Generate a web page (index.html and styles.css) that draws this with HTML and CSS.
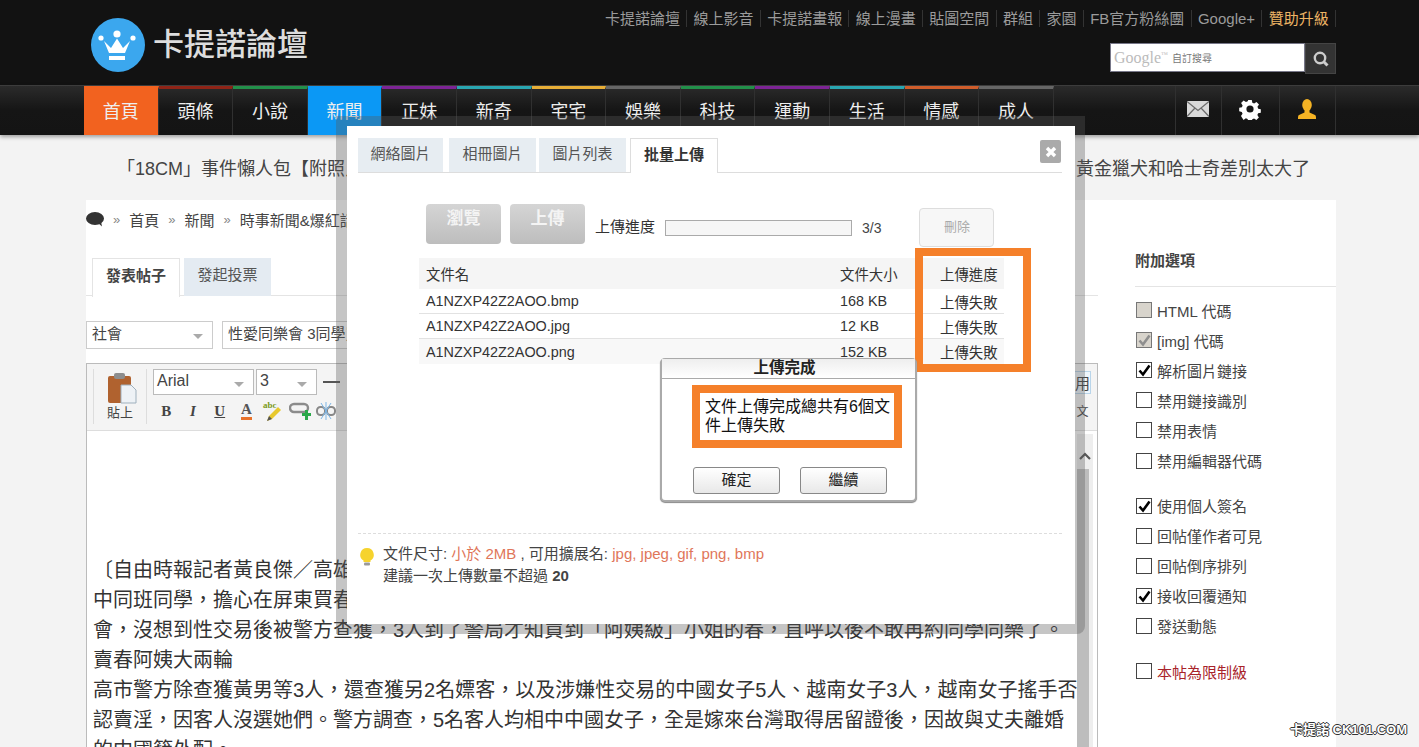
FILE: index.html
```html
<!DOCTYPE html>
<html lang="zh-Hant">
<head>
<meta charset="utf-8">
<title>卡提諾論壇</title>
<link rel="stylesheet" href="styles.css">
</head>
<body>
<header class="top">
  <div class="brand">
    <svg class="logo-mark" width="56" height="56" viewBox="0 0 56 56"><circle cx="28" cy="28" r="27" fill="#3ba7ee"/><path d="M14 24l7 7 6-9.500 6 9.500 7-7-5 12H19z" fill="#fff"/><circle cx="27" cy="17" r="3.600" fill="#fff"/><circle cx="11" cy="21" r="2.600" fill="#fff"/><circle cx="43" cy="21" r="2.600" fill="#fff"/><rect x="19" y="39" width="16" height="4" fill="#fff"/></svg>
    <span class="brand-name">卡提諾論壇</span>
  </div>
  <div class="top-right">
    <nav class="links">
      <a>卡提諾論壇</a><a>線上影音</a><a>卡提諾畫報</a><a>線上漫畫</a><a>貼圖空間</a><a>群組</a><a>家園</a><a>FB官方粉絲團</a><a>Google+</a><a class="gold">贊助升級</a>
    </nav>
    <div class="search">
      <div class="search-box"><span class="g-mark">Google<sup>™</sup></span><span class="g-text">自訂搜尋</span></div>
      <div class="search-btn"><svg width="18" height="18" viewBox="0 0 18 18"><circle cx="8" cy="8" r="5.200" fill="none" stroke="#ccc" stroke-width="2.400"/><path d="M11.500 11.500l4 4" stroke="#ccc" stroke-width="3"/></svg></div>
    </div>
  </div>
</header>

<nav class="menu">
  <a class="m m-home">首頁</a>
  <a class="m c-red">頭條</a>
  <a class="m c-green">小說</a>
  <a class="m m-news">新聞</a>
  <a class="m c-purple">正妹</a>
  <a class="m c-teal">新奇</a>
  <a class="m c-yellow">宅宅</a>
  <a class="m c-gray">娛樂</a>
  <a class="m c-green">科技</a>
  <a class="m c-purple">運動</a>
  <a class="m c-teal">生活</a>
  <a class="m c-orange">情感</a>
  <a class="m c-gray">成人</a>
  <div class="menu-icons">
    <span class="mi mi-mail"><svg width="22" height="16" viewBox="0 0 22 16"><rect width="22" height="16" fill="#d9d9d9"/><path d="M0 .5l11 9 11-9M0 15.500l8-8.500M22 15.500l-8-8.500" fill="none" stroke="#6a6a6a" stroke-width="1.200"/></svg></span>
    <span class="mi mi-gear"><svg width="22" height="22" viewBox="0 0 22 22"><path d="M9 1h4l.6 3 2 .9 2.600-1.700 2.800 2.800-1.700 2.600.8 2 2.900.6v4l-3 .6-.8 2 1.700 2.600-2.800 2.800-2.600-1.700-2 .8-.6 2.900H9l-.6-3-2-.8-2.600 1.700L1 18.800l1.700-2.600-.8-2-2.900-.6v-4l3-.6.800-2L1.100 4.400 3.900 1.600l2.600 1.700 2-.8z" transform="translate(1.100 1.100) scale(.9)" fill="#fff"/><circle cx="11" cy="11" r="3.600" fill="#161616"/></svg></span>
    <span class="mi mi-user"><svg width="20" height="22" viewBox="0 0 20 22"><ellipse cx="10" cy="7" rx="4.800" ry="6" fill="#f5b324"/><path d="M7.500 12v2.500L2 17c-1 .6-1 2-1 4h18c0-2 0-3.400-1-4l-5.500-2.500V12z" fill="#f5b324"/></svg></span>
  </div>
</nav>

<div class="ticker">
  <span>「18CM」事件懶人包【附照片】網友整理來龍去脈懶人包</span>
  <span>黃金獵犬和哈士奇差別太大了</span>
</div>

<main class="page">
  <section class="post">
    <div class="crumbs">
      <svg class="bubble" width="18" height="15" viewBox="0 0 18 15"><ellipse cx="9" cy="6.500" rx="9" ry="6.500" fill="#333"/><path d="M12 11l4 3.500-1-5z" fill="#333"/></svg>
      <span class="sep">»</span><a>首頁</a><span class="sep">»</span><a>新聞</a><span class="sep">»</span><a>時事新聞&amp;爆紅話題</a>
    </div>
    <div class="post-tabs">
      <a class="post-tab on">發表帖子</a>
      <a class="post-tab">發起投票</a>
    </div>
    <div class="subject">
      <div class="sel sel-type">社會<i class="caret"></i></div>
      <div class="sel sel-title">性愛同樂會 3同學買春遇阿姨級小姐</div>
    </div>
    <div class="editor">
      <div class="toolbar">
        <div class="paste">
          <svg width="30" height="32" viewBox="0 0 30 32"><rect x="1" y="4" width="23" height="27" rx="2" fill="#b0622f"/><rect x="7" y="1" width="11" height="6" rx="2" fill="#8d8d8d"/><path d="M14 13h10l5 5v13H14z" fill="#eef2f6" stroke="#9fb0bd"/></svg>
          <span>貼上</span>
        </div>
        <div class="tb-rows">
          <div class="tb-row">
            <div class="tb-sel tb-font">Arial<i class="caret"></i></div>
            <div class="tb-sel tb-size">3<i class="caret"></i></div>
            <span class="tb-dash"></span>
          </div>
          <div class="tb-row tb-btns">
            <span class="cell tb-b">B</span>
            <span class="cell tb-i">I</span>
            <span class="cell tb-u">U</span>
            <span class="cell"><span class="tb-a">A</span></span>
            <span class="cell"><svg width="24" height="24" viewBox="0 0 24 24"><path d="M6 22l2-5 9-9 3 3-9 9z" fill="#e8c92e"/><path d="M6 22l2-5 3 3z" fill="#555"/><text x="2" y="9" class="tb-abc">abc</text></svg></span>
            <span class="cell"><svg width="22" height="18" viewBox="0 0 22 18"><rect x="1" y="2" width="18" height="8" rx="4" fill="none" stroke="#8b8b8b" stroke-width="2.400"/><path d="M13 11h3V8h3v3h3v3h-3v4h-3v-4h-3z" fill="#2aa84a"/></svg></span>
            <span class="cell"><svg width="20" height="18" viewBox="0 0 20 18"><rect x="1" y="5" width="8" height="8" rx="3.500" fill="none" stroke="#888" stroke-width="2"/><rect x="11" y="5" width="8" height="8" rx="3.500" fill="none" stroke="#888" stroke-width="2"/><path d="M10 0v18M5 1l10 16M15 1L5 17" stroke="#7db7e8"/></svg></span>
          </div>
        </div>
        <div class="tb-right">
          <span class="tb-use">用</span>
          <span class="tb-small">文</span>
        </div>
      </div>
      <div class="edit-body">
        <div class="edit-text">
          <p>〔自由時報記者黃良傑／高雄報導〕一名黃姓男子找來兩名國</p>
          <p>中同班同學，擔心在屏東買春會被熟人撞見，相約到高雄開同樂</p>
          <p>會，沒想到性交易後被警方查獲，3人到了警局才知買到「阿姨級」小姐的春，直呼以後不敢再約同學同樂了。</p>
          <p>賣春阿姨大兩輪</p>
          <p>高市警方除查獲黃男等3人，還查獲另2名嫖客，以及涉嫌性交易的中國女子5人、越南女子3人，越南女子搖手否</p>
          <p>認賣淫，因客人沒選她們。警方調查，5名客人均相中中國女子，全是嫁來台灣取得居留證後，因故與丈夫離婚</p>
          <p>的中國籍外配。</p>
        </div>
        <div class="scrollbar">
          <svg class="sb-up" width="12" height="8" viewBox="0 0 12 8"><path d="M1 7l5-5 5 5" fill="none" stroke="#555" stroke-width="2.200"/></svg>
          <div class="sb-thumb"></div>
        </div>
      </div>
    </div>
  </section>

  <aside class="opts">
    <h3 class="opts-title">附加選項</h3>
    <div class="opt-group">
      <label class="opt"><span class="box box-off"></span>HTML 代碼</label>
      <label class="opt"><span class="box box-off"><svg width="15" height="15" viewBox="0 0 15 15"><path d="M2.500 7.500l3.500 4 6.500-9" fill="none" stroke="#8e8e8e" stroke-width="2.600"/></svg></span>[img] 代碼</label>
      <label class="opt"><span class="box"><svg width="15" height="15" viewBox="0 0 15 15"><path d="M2.500 7.500l3.500 4 6.500-9" fill="none" stroke="#000" stroke-width="2.600"/></svg></span>解析圖片鏈接</label>
      <label class="opt"><span class="box"></span>禁用鏈接識別</label>
      <label class="opt"><span class="box"></span>禁用表情</label>
      <label class="opt"><span class="box"></span>禁用編輯器代碼</label>
    </div>
    <div class="opt-group">
      <label class="opt"><span class="box"><svg width="15" height="15" viewBox="0 0 15 15"><path d="M2.500 7.500l3.500 4 6.500-9" fill="none" stroke="#000" stroke-width="2.600"/></svg></span>使用個人簽名</label>
      <label class="opt"><span class="box"></span>回帖僅作者可見</label>
      <label class="opt"><span class="box"></span>回帖倒序排列</label>
      <label class="opt"><span class="box"><svg width="15" height="15" viewBox="0 0 15 15"><path d="M2.500 7.500l3.500 4 6.500-9" fill="none" stroke="#000" stroke-width="2.600"/></svg></span>接收回覆通知</label>
      <label class="opt"><span class="box"></span>發送動態</label>
    </div>
    <div class="opt-group">
      <label class="opt opt-red"><span class="box"></span>本帖為限制級</label>
    </div>
  </aside>
</main>

<div class="watermark">卡提諾 CK101.COM</div>

<div class="modal-shade">
  <div class="modal">
    <div class="modal-tabs">
      <a class="mtab">網絡圖片</a>
      <a class="mtab">相冊圖片</a>
      <a class="mtab">圖片列表</a>
      <a class="mtab on">批量上傳</a>
      <span class="close"><svg width="12" height="12" viewBox="0 0 12 12"><path d="M2 2l8 8M10 2l-8 8" stroke="#fff" stroke-width="3.400"/></svg></span>
    </div>
    <div class="upload-bar">
      <a class="ubtn">瀏覽</a>
      <a class="ubtn">上傳</a>
      <span class="ulabel">上傳進度</span>
      <div class="progress"></div>
      <span class="ucount">3/3</span>
      <a class="del">刪除</a>
    </div>
    <div class="files">
      <div class="frow fhead"><span>文件名</span><span>文件大小</span><span>上傳進度</span></div>
      <div class="frow"><span>A1NZXP42Z2AOO.bmp</span><span>168 KB</span><span>上傳失敗</span></div>
      <div class="frow"><span>A1NZXP42Z2AOO.jpg</span><span>12 KB</span><span>上傳失敗</span></div>
      <div class="frow frow-alt"><span>A1NZXP42Z2AOO.png</span><span>152 KB</span><span>上傳失敗</span></div>
    </div>
    <div class="hint">
      <svg class="bulb" width="14" height="18" viewBox="0 0 14 18"><path d="M7 0a6.800 6.800 0 0 1 3.500 12.600V14h-7v-1.400A6.800 6.800 0 0 1 7 0z" fill="#f6d32d"/><rect x="4" y="14.500" width="6" height="3" rx="1" fill="#9a9a9a"/></svg>
      <div class="hint-text">
        <p>文件尺寸: <em>小於 2MB</em> , 可用擴展名: <em>jpg, jpeg, gif, png, bmp</em></p>
        <p>建議一次上傳數量不超過 <strong>20</strong></p>
      </div>
    </div>
    <div class="mark mark-col"></div>
    <div class="alert">
      <div class="alert-title">上傳完成</div>
      <div class="alert-body"><p class="alert-msg">文件上傳完成總共有6個文件上傳失敗</p></div>
      <div class="alert-btns"><a class="abtn">確定</a><a class="abtn">繼續</a></div>
    </div>
  </div>
</div>
</body>
</html>
```
FILE: styles.css
```css
* { box-sizing: border-box; }
html, body { margin: 0; height: 747px; overflow: hidden; }
body {
  width: 1419px;
  position: relative;
  background: #f3f3f3;
  color: #333;
  font-family: "Liberation Sans", "Noto Sans CJK TC", sans-serif;
  font-size: 14px;
}
p, h3 { margin: 0; }

/* header */
.top {
  height: 85px;
  background: #121212;
  display: flex;
  justify-content: space-between;
  padding: 0 83px 0 90px;
}
.brand { display: flex; align-items: center; gap: 7px; height: 88px; margin-top: 1px; }
.logo-mark { display: block; }
.brand-name { color: #ddd; font-size: 31px; line-height: 40px; font-weight: 500; }
.top-right { display: flex; flex-direction: column; align-items: flex-end; }
.links { display: flex; margin-top: 10px; height: 17px; align-items: center; }
.links a {
  color: #9b9b9b;
  font-size: 15px;
  line-height: 17px;
  padding: 0 6.300px;
  border-right: 1px solid #333;
  white-space: nowrap;
}
.links a.gold { color: #eeb565; }
.search { display: flex; margin-top: 16px; }
.search-box {
  width: 195px; height: 29px; background: #fff;
  border: 1px solid #778;
  display: flex; align-items: center; padding-left: 3px; gap: 4px;
}
.g-mark { color: #bbb; font-family: "Liberation Serif", serif; font-size: 16px; }
.g-mark sup { font-size: 7px; }
.g-text { color: #777; font-size: 10px; }
.search-btn {
  width: 31px; height: 31px; background: #333; border: 1px solid #444;
  display: flex; align-items: center; justify-content: center;
}

/* menu */
.menu {
  height: 50px;
  display: flex;
  padding-left: 84px;
  background: linear-gradient(#2b2b2b, #151515 50%, #141414);
  box-shadow: 0 2px 4px rgba(0,0,0,.35);
  border-top: 1px solid #3c3c3c;
}
.m {
  width: 74.600px;
  border-top: 3px solid #555;
  border-right: 1px solid #303030;
  color: #eee;
  font-size: 18px;
  line-height: 46px;
  text-align: center;
  white-space: nowrap;
}
.m-home { background: #f2621f; border-top-color: #f2621f; }
.m-news { background: #0b98f5; border-top-color: #0b98f5; }
.c-red { border-top-color: #8f2417; }
.c-green { border-top-color: #22904a; }
.c-purple { border-top-color: #7d2495; }
.c-teal { border-top-color: #29a6b1; }
.c-yellow { border-top-color: #e7ae37; }
.c-gray { border-top-color: #666; }
.c-orange { border-top-color: #cf5d2b; }
.menu-icons { margin-left: 121px; display: flex; }
.mi {
  display: flex; align-items: center; justify-content: center;
  border-left: 1px solid #303030; height: 49px; padding-bottom: 4px;
}
.mi-mail { width: 46px; }
.mi-gear { width: 58px; }
.mi-user { width: 57px; border-right: 1px solid #303030; }

/* ticker */
.ticker {
  height: 65px;
  display: flex;
  justify-content: space-between;
  align-items: center;
  padding: 0 109px 2px 117px;
  font-size: 18px;
  color: #444;
}

/* page */
.page {
  margin-left: 86px;
  width: 1250px;
  height: 547px;
  background: #fff;
  display: flex;
  overflow: hidden;
}
.post { width: 1012px; flex: none; }
.crumbs { height: 38px; display: flex; align-items: center; color: #444; font-size: 15px; gap: 9px; white-space: nowrap; }
.bubble { display: block; }
.sep { color: #888; font-size: 13px; }
.post-tabs { height: 58px; padding: 20px 0 0 6px; display: flex; gap: 4px; border-bottom: 1px solid #e4e4e4; }
.post-tab {
  width: 87px; height: 38px; line-height: 34px; text-align: center;
  background: #e4ebf2; color: #555; font-size: 15px;
}
.post-tab.on { width: 88px; background: #fff; border: 1px solid #e4e4e4; border-bottom: 0; height: 39px; font-weight: 700; color: #444; }
.subject { display: flex; gap: 9px; margin-top: 25px; height: 28px; }
.sel { height: 28px; border: 1px solid #ccc; line-height: 23px; padding-left: 5px; font-size: 15px; color: #444; position: relative; background: #fff; }
.sel-type { width: 127px; }
.sel-title { width: 780px; }
.caret { position: absolute; right: 9px; top: 12px; border: 5px solid transparent; border-top: 5px solid #aaa; border-bottom: 0; }

.editor { margin-top: 14px; border: 1px solid #bbb; border-bottom: 0; }
.toolbar { height: 67px; background: #f4f4f4; border-bottom: 1px solid #ddd; display: flex; padding: 5px 0 0 6px; position: relative; }
.paste { width: 54px; display: flex; flex-direction: column; align-items: center; font-size: 13px; color: #444; border-left: 1px solid #ddd; border-right: 1px solid #ddd; height: 55px; line-height: 17px; padding-top: 3px; }
.paste svg { display: block; margin-left: 4px; }
.tb-rows { margin-left: 6px; display: flex; flex-direction: column; gap: 1px; }
.tb-row { display: flex; gap: 2px; align-items: center; }
.tb-sel { height: 26px; background: #fff; border: 1px solid #bbb; padding-left: 3px; line-height: 22px; font-size: 16px; color: #444; position: relative; }
.tb-font { width: 101px; }
.tb-size { width: 61px; }
.tb-dash { width: 17px; height: 2px; background: #555; margin-left: 4px; }
.tb-btns { gap: 0; height: 30px; color: #444; font-family: "Liberation Serif", serif; font-size: 15px; }
.cell { width: 26.700px; height: 30px; display: flex; align-items: center; justify-content: center; }
.tb-b { font-weight: 700; }
.tb-i { font-style: italic; font-weight: 700; }
.tb-u { text-decoration: underline; font-weight: 700; }
.tb-a { color: #555; font-weight: 700; border-bottom: 3px solid #e8722a; line-height: 15px; }
.tb-abc { font-size: 9px; font-weight: 700; fill: #7a9a20; }
.tb-right { position: absolute; right: 6px; top: 7px; width: 17px; display: flex; flex-direction: column; color: #444; font-size: 15px; gap: 8px; align-items: center; }
.tb-use { border: 1px solid #b9d5ea; background: #eef6fc; }
.tb-small { font-size: 12px; }
.edit-body { display: flex; }
.edit-text { width: 990px; padding: 124px 0 0 6px; font-size: 20px; line-height: 30px; color: #333; }
.edit-text p { white-space: nowrap; }
.scrollbar { width: 16px; height: 320px; background: #eee; position: relative; margin-top: 3px; }
.sb-up { position: absolute; left: 2px; top: 18px; }
.sb-thumb { position: absolute; top: 35px; bottom: 0; left: 0; width: 12px; background: #bdbdbd; }

/* options */
.opts { margin-left: 37px; width: 201px; flex: none; }
.opts-title { font-size: 15px; font-weight: 700; color: #444; height: 87px; line-height: 20px; padding-top: 51px; border-bottom: 1px solid #e4e4e4; }
.opt-group { margin-top: 8px; margin-bottom: 15px; }
.opt-group + .opt-group { margin-top: 0; }
.opt { display: flex; align-items: center; height: 30.100px; font-size: 15px; color: #444; white-space: nowrap; gap: 5px; padding-left: 1px; }
.box { width: 16px; height: 16px; border: 1px solid #444; background: #fff; display: block; flex: none; }
.box svg { display: block; }
.box-off { background: #d8d4cc; border-color: #777; }
.opt-red { color: #a8232a; }

.watermark {
  position: absolute; right: 12px; bottom: 9px;
  font-size: 13px; font-weight: 700; color: #fff;
  text-shadow: 1px 0 #333, -1px 0 #333, 0 1px #333, 0 -1px #333;
}

/* modal */
.modal-shade {
  position: absolute; left: 336px; top: 116px;
  width: 749px; height: 518px;
  padding: 10px 10px 10px 11px;
  background: rgba(90,90,90,.35);
  border-radius: 0 0 8px 0;
}
.modal { width: 728px; height: 498px; background: #fff; position: relative; padding: 12px 13px 0 11px; }
.modal-tabs { height: 35px; display: flex; gap: 3px; border-bottom: 1px solid #ddd; position: relative; }
.mtab { width: 87px; height: 34px; background: #e7edf2; color: #555; text-align: center; line-height: 32px; font-size: 15px; }
.mtab:first-child { width: 85px; margin-right: 3px; }
.mtab.on { width: 88px; height: 35px; margin-left: 1px; background: #fff; border: 1px solid #ddd; border-bottom: 0; font-weight: 700; color: #333; }
.close {
  position: absolute; right: 1px; top: 2px; width: 21px; height: 23px;
  background: #aaa; border-radius: 2px; display: flex; align-items: center; justify-content: center;
}
.upload-bar { display: flex; align-items: flex-start; margin: 31px 0 0 68px; height: 44px; }
.ubtn {
  width: 75px; height: 40px; border-radius: 4px;
  background: linear-gradient(#d5d5d5, #bdbdbd);
  color: #f4f4f4; font-size: 17px; font-weight: 700; text-align: center; line-height: 30px;
  margin-right: 9px;
}
.ulabel { font-size: 15px; color: #333; margin: 13px 10px 0 1px; line-height: 20px; }
.progress { width: 187px; height: 16px; margin-top: 16px; border: 1px solid #aaa; background: #f6f6f6; }
.ucount { margin: 15px 0 0 10px; line-height: 18px; color: #444; }
.del {
  width: 75px; height: 39px; margin: 4px 0 0 38px; border: 1px solid #ddd; border-radius: 4px;
  background: #f7f7f7; color: #aaa; font-size: 13px; text-align: center; line-height: 36px;
}
.files { margin: 10px 0 0 61px; width: 585px; }
.frow { height: 25px; display: grid; grid-template-columns: 414px 100px 64px; padding-left: 7px; align-items: center; border-bottom: 1px solid #e2e2e2; color: #333; font-size: 14.400px; white-space: nowrap; }
.fhead { height: 31px; background: #f5f5f5; border: 0; }
.frow-alt { background: #f8f8f8; border: 0; }
.hint { position: absolute; left: 11px; top: 407px; width: 704px; border-top: 1px dashed #ddd; display: flex; padding: 9px 0 0 2px; gap: 9px; }
.bulb { display: block; margin-top: 5px; }
.hint-text { font-size: 15px; line-height: 22px; color: #444; }
.hint-text em { font-style: normal; color: #e0765a; }
.mark { position: absolute; border: 8px solid #f5802a; pointer-events: none; }
.mark-col { left: 568px; top: 122px; width: 116px; height: 124px; }
.alert {
  position: absolute; left: 313px; top: 232px; width: 257px; height: 144px;
  background: #fff; border: 2px solid #aaa; border-top-width: 1px; border-radius: 5px;
  box-shadow: 0 1px 1px #888;
  display: flex; flex-direction: column;
}
.alert-title { height: 20px; padding-right: 8px; background: linear-gradient(#eee, #fff); border-bottom: 1px solid #aaa; text-align: center; font-weight: 700; font-size: 15.500px; line-height: 18px; color: #222; }
.alert-body { margin: 6px 13px 0 30px; width: 210px; height: 63px; border: 8px solid #f5802a; padding: 4px 4px 0 5px; }
.alert-msg { font-size: 16px; line-height: 19px; color: #111; width: 190px; }
.alert-btns { display: flex; gap: 20px; margin: 19px 0 0 31px; }
.abtn {
  width: 87px; height: 27px; border: 1px solid #888; border-radius: 3px;
  background: linear-gradient(#fff, #e8e8e8); text-align: center; line-height: 24px; font-size: 15px; color: #222;
}
```
